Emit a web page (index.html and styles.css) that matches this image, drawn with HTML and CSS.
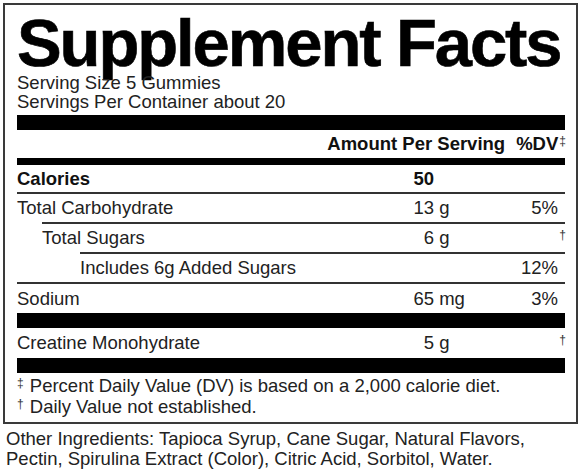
FILE: index.html
```html
<!DOCTYPE html>
<html>
<head>
  <meta charset="UTF-8">
  <title>Supplement Facts</title>
  <link rel="stylesheet" href="styles.css">
</head>
<body>
  <div class="label">
    <h1 class="title">Supplement Facts</h1>
    <div class="serving">Serving Size 5 Gummies</div>
    <div class="serving">Servings Per Container about 20</div>

    <div class="bar thick"></div>
    <div class="head">
      <span class="head-amt">Amount Per Serving</span>
      <span class="head-dv">%DV<span class="mark">‡</span></span>
    </div>
    <div class="bar medium"></div>

    <!-- 營養成分 -->
    <div class="row first strong">
      <span class="name">Calories</span>
      <span class="amt"><span class="num">50</span></span>
      <span class="dv"></span>
    </div>
    <div class="row">
      <span class="name">Total Carbohydrate</span>
      <span class="amt"><span class="num">13</span> g</span>
      <span class="dv">5%</span>
    </div>
    <div class="row indent1">
      <span class="name">Total Sugars</span>
      <span class="amt"><span class="num">6</span> g</span>
      <span class="dv"><span class="mark">†</span></span>
    </div>
    <div class="row indent2">
      <span class="name">Includes 6g Added Sugars</span>
      <span class="amt"></span>
      <span class="dv">12%</span>
    </div>
    <div class="row tall">
      <span class="name">Sodium</span>
      <span class="amt"><span class="num">65</span> mg</span>
      <span class="dv">3%</span>
    </div>
    <div class="bar thick"></div>
    <div class="row first tall">
      <span class="name">Creatine Monohydrate</span>
      <span class="amt"><span class="num">5</span> g</span>
      <span class="dv"><span class="mark">†</span></span>
    </div>
    <div class="bar thick"></div>

    <div class="notes">
      <div><span class="mark">‡</span> Percent Daily Value (DV) is based on a 2,000 calorie diet.</div>
      <div><span class="mark">†</span> Daily Value not established.</div>
    </div>
  </div>

  <p class="ingredients">Other Ingredients: Tapioca Syrup, Cane Sugar, Natural Flavors,<br>Pectin, Spirulina Extract (Color), Citric Acid, Sorbitol, Water.</p>
</body>
</html>
```

FILE: styles.css
```css
/* 全局樣式 */
* {
  box-sizing: border-box;
  margin: 0;
  padding: 0;
}

body {
  background: #fff;
  color: #222;
  font-family: "Liberation Sans", Arial, sans-serif;
  font-size: 18.5px;
}

/* 外框 */
.label {
  margin: 3px 2px 0 3px;
  border: 2px solid #3a3a3a;
  padding: 7px 11px 5px 12px;
}

.title {
  font-size: 67px;
  line-height: 61px;
  font-weight: bold;
  letter-spacing: -2.1px;
  color: #000;
  -webkit-text-stroke: 0.6px #000;
  white-space: nowrap;
}

.serving {
  line-height: 19px;
}

/* 黑色分隔條 */
.bar {
  background: #000;
}
.bar.thick {
  height: 15px;
}
.serving + .bar {
  margin-top: 4px;
}
.bar.medium {
  height: 7px;
}

.head {
  display: flex;
  justify-content: flex-end;
  line-height: 28px;
  font-weight: bold;
  color: #111;
}
.head-amt {
  margin-right: 11px;
}
.head-dv {
  padding-right: 7px;
}

/* 表格列 */
.row {
  display: flex;
  line-height: 28px;
  border-top: 2px solid #333;
}
.row.first {
  border-top: none;
  line-height: 27px;
}
.row.tall {
  line-height: 29px;
}
.row.first.tall {
  line-height: 30px;
}
.row.strong {
  font-weight: bold;
  color: #111;
}
.indent1 {
  margin-left: 25px;
}
.indent2 {
  margin-left: 63px;
}

.name {
  flex: 1;
  white-space: nowrap;
}
.amt {
  width: 110px;
  white-space: nowrap;
}
.num {
  display: inline-block;
  width: 59px;
  text-align: right;
}
.dv {
  width: 80px;
  text-align: right;
  padding-right: 7px;
}

/* 註記符號 */
.mark {
  font-size: 12px;
  line-height: 0;
  vertical-align: 5px;
  color: #333;
  font-weight: normal;
}
.dv .mark,
.head-dv .mark {
  margin-right: -8px;
  margin-left: 1px;
}

.notes {
  padding-top: 2px;
  line-height: 21px;
}
.notes .mark {
  margin-right: 1px;
}

.ingredients {
  margin: 5px 0 0 6px;
  line-height: 20px;
}
```
